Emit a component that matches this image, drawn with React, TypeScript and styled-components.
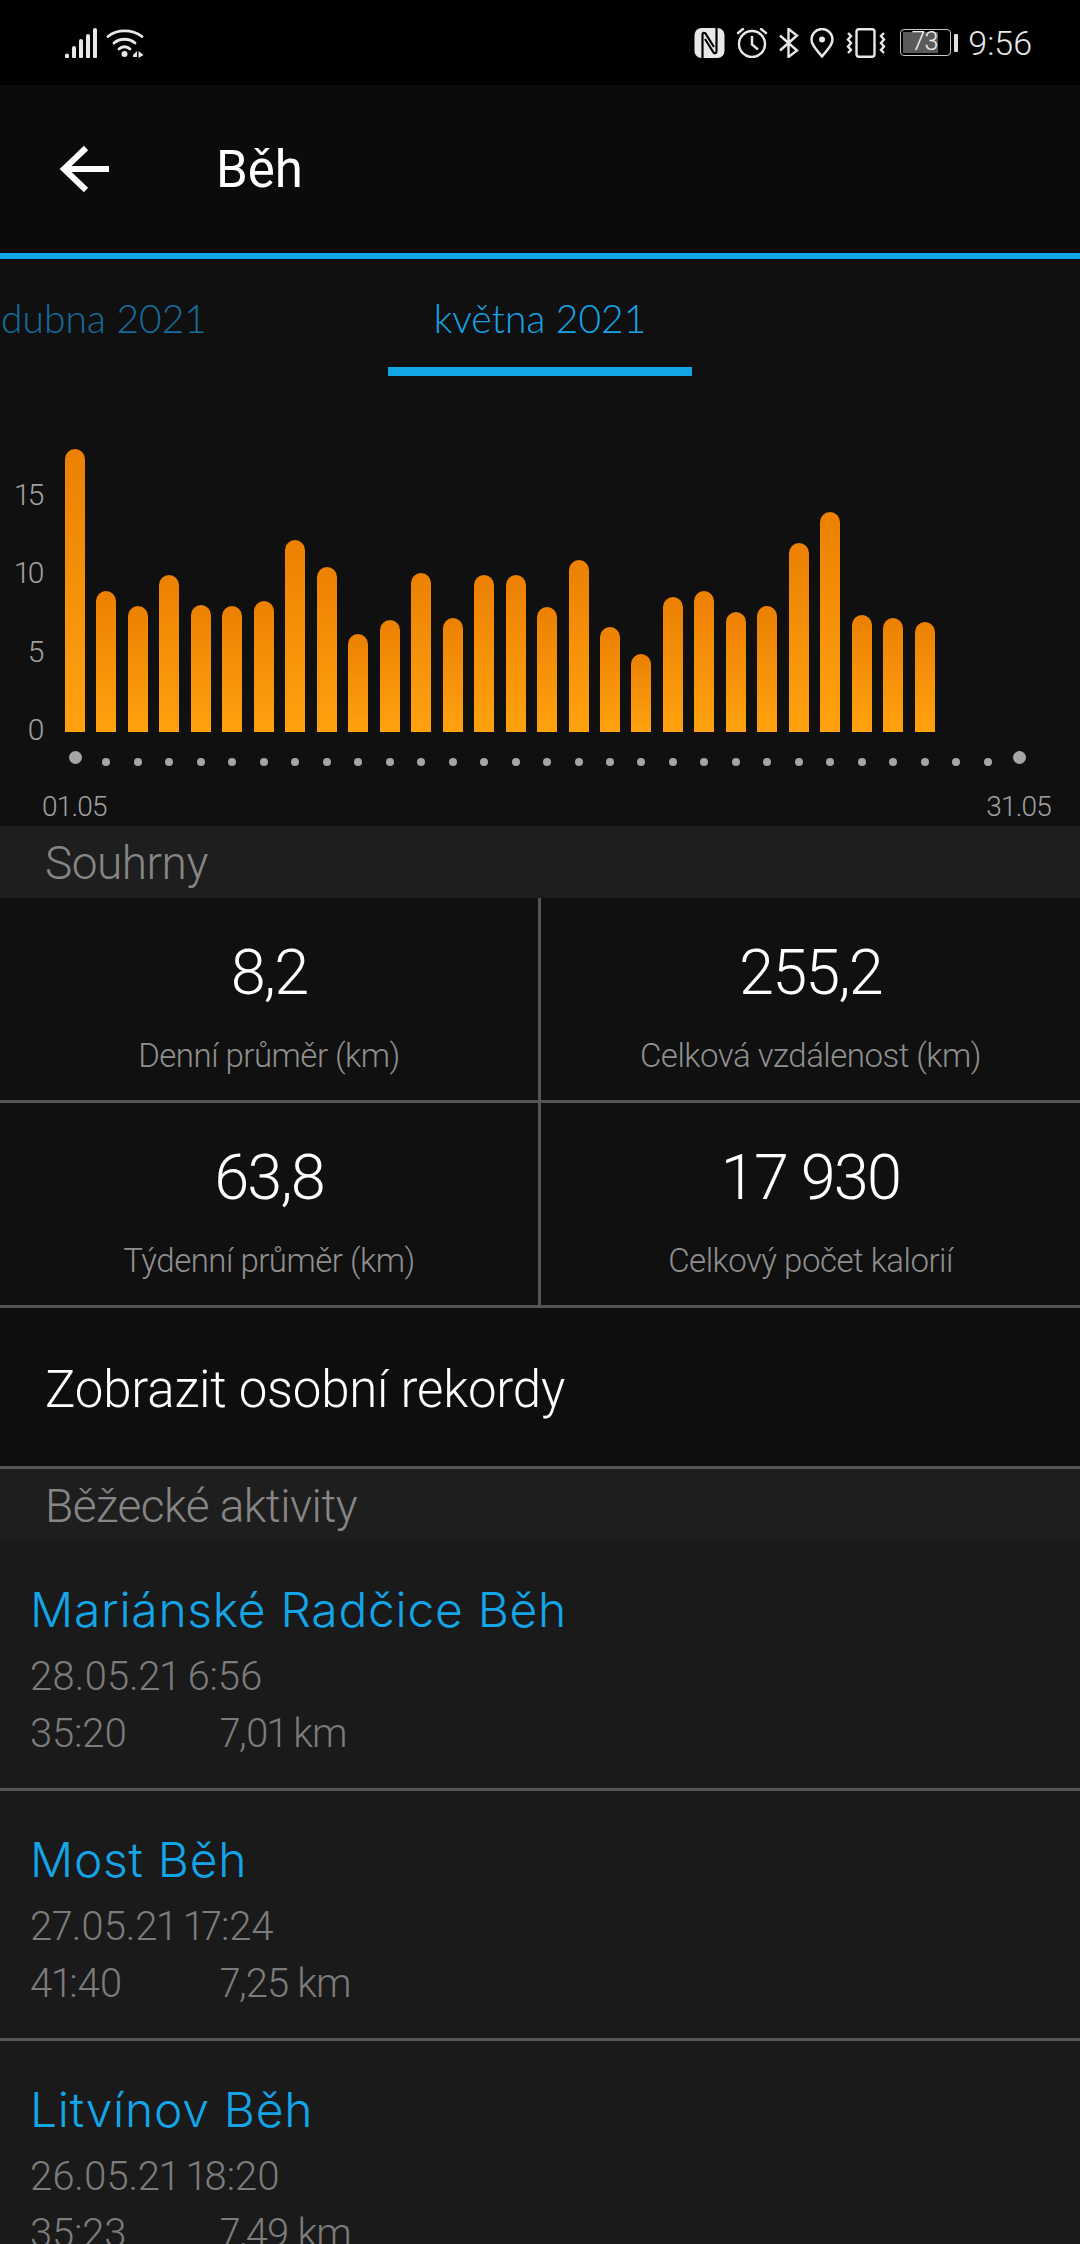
import React from 'react';
import styled, { createGlobalStyle } from 'styled-components';

const GlobalStyle = createGlobalStyle`
  html, body {
    margin: 0;
    padding: 0;
    background: #101010;
  }
  * {
    box-sizing: border-box;
  }
`;

const Page = styled.div`
  width: 1080px;
  height: 2244px;
  overflow: hidden;
  background: #101010;
  font-family: Roboto, "Noto Sans", sans-serif;
`;

const StatusBar = styled.div`
  height: 85px;
  background: #000;
  display: flex;
  align-items: center;
  justify-content: space-between;
  padding: 0 48px 0 64px;
  color: #e8e8e8;
`;

const StatusGroup = styled.div`
  display: flex;
  align-items: center;
  gap: 11px;
`;

const StatusIcon = styled.svg`
  display: block;
  height: 30px;
  flex: none;
`;

const BatteryWrap = styled.div`
  display: flex;
  align-items: center;
  width: 59px;
  margin-left: 2px;
`;

const BatteryShell = styled.div`
  width: 51px;
  height: 27px;
  border: 1.5px solid #c8c8c8;
  border-radius: 4px;
  padding: 2px;
`;

const BatteryFill = styled.div`
  width: 35px;
  height: 100%;
  background: #5a5a5a;
  font-size: 25px;
  font-weight: 300;
  line-height: 20px;
  text-align: right;
  letter-spacing: -1px;
  color: #f0f0f0;
  padding-right: 1px;
`;

const BatteryTip = styled.div`
  width: 4px;
  height: 18px;
  margin-left: 3px;
  background: #e0e0e0;
  border-radius: 1px;
`;

const Clock = styled.span`
  font-size: 34px;
  font-weight: 300;
  margin-left: -2px;
`;

const NavBar = styled.div`
  height: 174px;
  background: #0b0b0b;
  border-bottom: 6px solid #14a5e8;
  display: flex;
  align-items: center;
  padding-left: 59px;
`;

const BackIcon = styled.svg`
  display: block;
  width: 52px;
  height: 50px;
`;

const NavTitle = styled.h1`
  margin: 0 0 0 105px;
  font-size: 51px;
  font-weight: 400;
  color: #fff;
`;

const TabStrip = styled.div`
  height: 117px;
  display: flex;
  justify-content: center;
  gap: 132px;
  overflow: hidden;
`;

const Tab = styled.div<{ $active?: boolean }>`
  flex: none;
  width: 304px;
  height: 117px;
  text-align: center;
  font-family: Lato, sans-serif;
  font-weight: 300;
  font-size: 39px;
  line-height: 119px;
  color: ${(p) => (p.$active ? '#14a5e8' : '#156d9c')};
  border-bottom: 9px solid ${(p) => (p.$active ? '#14a5e8' : 'transparent')};
`;

const ChartRow = styled.div`
  display: flex;
  padding-top: 73px;
`;

const Axis = styled.div`
  width: 42px;
  margin-right: 23px;
  padding-top: 31px;
  display: flex;
  flex-direction: column;
  gap: 48.4px;
`;

const AxisLabel = styled.div`
  height: 30px;
  line-height: 30px;
  font-size: 30px;
  font-weight: 300;
  letter-spacing: -2.5px;
  text-align: right;
  color: #a0a0a0;
`;

const DayGrid = styled.div`
  display: grid;
  grid-template-columns: repeat(31, 20px);
  column-gap: 11.47px;
`;

const Bars = styled(DayGrid)`
  height: 283px;
  align-items: end;
`;

const Bar = styled.div`
  width: 100%;
  border-radius: 10px 10px 0 0;
  background: linear-gradient(180deg, #ec8002 0%, #ffa20f 100%);
`;

const Dots = styled(DayGrid)`
  height: 40px;
  align-items: start;
`;

const Dot = styled.div<{ $big?: boolean }>`
  justify-self: center;
  width: ${(p) => (p.$big ? 13 : 8)}px;
  height: ${(p) => (p.$big ? 13 : 8)}px;
  margin-top: ${(p) => (p.$big ? 19 : 26)}px;
  border-radius: 50%;
  background: #a6a6a6;
`;

const DateRange = styled.div`
  display: flex;
  justify-content: space-between;
  padding: 18px 29px 2px 42px;
  font-size: 28px;
  font-weight: 300;
  line-height: 34px;
  letter-spacing: -0.8px;
  color: #a0a0a0;
`;

const SectionHeader = styled.div`
  height: 72px;
  padding-left: 45px;
  background: #1e1e1e;
  font-size: 46px;
  font-weight: 300;
  line-height: 75px;
  letter-spacing: -0.5px;
  color: #868686;
`;

const StatsGrid = styled.div`
  display: grid;
  grid-template-columns: 541px 1fr;
`;

const StatCell = styled.div<{ $left?: boolean }>`
  height: 205px;
  padding-top: 39px;
  text-align: center;
  border-bottom: 3px solid #555;
  border-right: ${(p) => (p.$left ? '3px solid #555' : 'none')};
`;

const StatValue = styled.div`
  height: 72px;
  font-size: 63px;
  font-weight: 300;
  line-height: 72px;
  letter-spacing: -1.8px;
  color: #fff;
`;

const StatLabel = styled.div`
  margin-top: 27px;
  font-size: 33px;
  font-weight: 300;
  line-height: 40px;
  letter-spacing: -0.5px;
  color: #8f8f8f;
`;

const RecordsRow = styled.div`
  height: 161px;
  padding-left: 45px;
  background: #0e0e0e;
  border-bottom: 3px solid #555;
  font-size: 51px;
  font-weight: 300;
  line-height: 163px;
  letter-spacing: -0.2px;
  color: #fff;
`;

const ActivityItem = styled.div`
  height: 250px;
  padding: 39px 0 0 30px;
  background: #1a1a1a;
  border-bottom: 3px solid #555;
`;

const ActivityTitle = styled.div`
  height: 60px;
  margin-bottom: 8px;
  font-family: Inter, sans-serif;
  font-size: 48px;
  font-weight: 300;
  line-height: 60px;
  letter-spacing: 0.7px;
  color: #14a5e8;
`;

const ActivityLine = styled.div`
  display: flex;
  height: 57px;
  font-size: 40px;
  font-weight: 300;
  line-height: 57px;
  font-variant-numeric: proportional-nums;
  letter-spacing: -0.2px;
  color: #7c7c7c;
`;

const ActivityTime = styled.span`
  width: 190px;
`;

const ActivityDistance = styled.span`
  letter-spacing: -0.9px;
`;

const barHeights = [
  283, 141, 126, 157, 127, 126, 131, 192, 165, 98, 112, 159, 114, 157, 157, 125, 172, 105, 78, 135,
  141, 120, 126, 189, 220, 117, 114, 110,
];

const stats = [
  { value: '8,2', label: 'Denní průměr (km)', left: true },
  { value: '255,2', label: 'Celková vzdálenost (km)' },
  { value: '63,8', label: 'Týdenní průměr (km)', left: true },
  { value: '17 930', label: 'Celkový počet kalorií' },
];

const activities = [
  { title: 'Mariánské Radčice Běh', date: '28.05.21 6:56', time: '35:20', distance: '7,01 km' },
  { title: 'Most Běh', date: '27.05.21 17:24', time: '41:40', distance: '7,25 km' },
  { title: 'Litvínov Běh', date: '26.05.21 18:20', time: '35:23', distance: '7,49 km' },
];

const SignalIcons = () => (
  <StatusIcon viewBox="0 0 80 30" style={{ width: 80 }} fill="none">
    <g stroke="#e8e8e8" strokeWidth="4" strokeLinecap="round">
      <path d="M3 27.5v1M10 20v8.500M17 13v15.500M24 8v20.500M31 2v26.500" />
    </g>
    <g stroke="#e8e8e8" strokeWidth="2.800" strokeLinecap="round">
      <path d="M44 8.500C53 1 68 1 78 8.500" />
      <path d="M50 15C56 10 65 10 71 15" />
      <path d="M55 21C58 18 63 18 66 21" />
    </g>
    <circle cx="60.500" cy="26" r="3" fill="#e8e8e8" />
    <path d="M69 27l4-4v6h-4zM74.500 23l5 4-5 3z" fill="#e8e8e8" />
  </StatusIcon>
);

const NfcIcon = () => (
  <StatusIcon viewBox="0 0 31 30" style={{ width: 31 }}>
    <rect x="0.500" width="30" height="30" rx="7" fill="#e8e8e8" />
    <path
      d="M8.500 30V7Q8.500 3.500 11.500 5.500L20 19M22.500 0V23Q22.500 26.500 19.500 24.500L11 11"
      stroke="#000"
      strokeWidth="2.200"
      fill="none"
    />
  </StatusIcon>
);

const AlarmIcon = () => (
  <StatusIcon viewBox="0 0 32 30" style={{ width: 32 }} fill="none" stroke="#e8e8e8" strokeWidth="2.400">
    <circle cx="16" cy="16" r="13" />
    <path d="M16 8v8.500l6 5" />
    <path d="M2 5l5-4M30 5l-5-4" strokeLinecap="round" />
  </StatusIcon>
);

const BluetoothIcon = () => (
  <StatusIcon viewBox="0 0 20 30" style={{ width: 20 }} fill="none" stroke="#e8e8e8" strokeWidth="2.400">
    <path d="M1 7.500l17 15-8.500 6.500V1L18 7.500 1 22.500" />
  </StatusIcon>
);

const PinIcon = () => (
  <StatusIcon viewBox="0 0 24 30" style={{ width: 24 }} fill="none" stroke="#e8e8e8" strokeWidth="2.400">
    <path d="M12 28.500C6 21 1.500 17 1.500 11.500a10.500 10.500 0 0 1 21 0C22.500 17 18 21 12 28.500z" />
    <circle cx="12" cy="11.500" r="3" fill="#e8e8e8" stroke="none" />
  </StatusIcon>
);

const VibrateIcon = () => (
  <StatusIcon viewBox="0 0 42 30" style={{ width: 42 }} fill="none" stroke="#e8e8e8" strokeWidth="2.400">
    <rect x="11.500" y="1.200" width="18" height="27.600" rx="2.500" />
    <path d="M3 5l3 3-3 3.500 3 3.500-3 3.500 3 3.500-3 3" />
    <path d="M39 5l-3 3 3 3.500-3 3.500 3 3.500-3 3.500 3 3" />
  </StatusIcon>
);

const App = () => (
  <Page>
    <GlobalStyle />
    <StatusBar>
      <SignalIcons />
      <StatusGroup>
        <NfcIcon />
        <AlarmIcon />
        <BluetoothIcon />
        <PinIcon />
        <VibrateIcon />
        <BatteryWrap>
          <BatteryShell>
            <BatteryFill>73</BatteryFill>
          </BatteryShell>
          <BatteryTip />
        </BatteryWrap>
        <Clock>9:56</Clock>
      </StatusGroup>
    </StatusBar>

    <NavBar>
      <BackIcon viewBox="0 0 52 50" fill="none" stroke="#fff" strokeWidth="6">
        <path d="M27 4L5 25l22 21M5 25h45" />
      </BackIcon>
      <NavTitle>Běh</NavTitle>
    </NavBar>

    <TabStrip>
      <Tab>dubna 2021</Tab>
      <Tab $active>května 2021</Tab>
      <Tab />
    </TabStrip>

    <ChartRow>
      <Axis>
        {['15', '10', '5', '0'].map((label) => (
          <AxisLabel key={label}>{label}</AxisLabel>
        ))}
      </Axis>
      <div>
        <Bars>
          {barHeights.map((height, i) => (
            <Bar key={i} style={{ height }} />
          ))}
        </Bars>
        <Dots>
          {Array.from({ length: 31 }, (_, i) => (
            <Dot key={i} $big={i === 0 || i === 30} />
          ))}
        </Dots>
      </div>
    </ChartRow>

    <DateRange>
      <span>01.05</span>
      <span>31.05</span>
    </DateRange>

    <SectionHeader>Souhrny</SectionHeader>
    <StatsGrid>
      {stats.map((stat) => (
        <StatCell key={stat.label} $left={stat.left}>
          <StatValue>{stat.value}</StatValue>
          <StatLabel>{stat.label}</StatLabel>
        </StatCell>
      ))}
    </StatsGrid>

    <RecordsRow>Zobrazit osobní rekordy</RecordsRow>

    <SectionHeader>Běžecké aktivity</SectionHeader>
    {activities.map((activity) => (
      <ActivityItem key={activity.title}>
        <ActivityTitle>{activity.title}</ActivityTitle>
        <ActivityLine>{activity.date}</ActivityLine>
        <ActivityLine>
          <ActivityTime>{activity.time}</ActivityTime>
          <ActivityDistance>{activity.distance}</ActivityDistance>
        </ActivityLine>
      </ActivityItem>
    ))}
  </Page>
);

export default App;
